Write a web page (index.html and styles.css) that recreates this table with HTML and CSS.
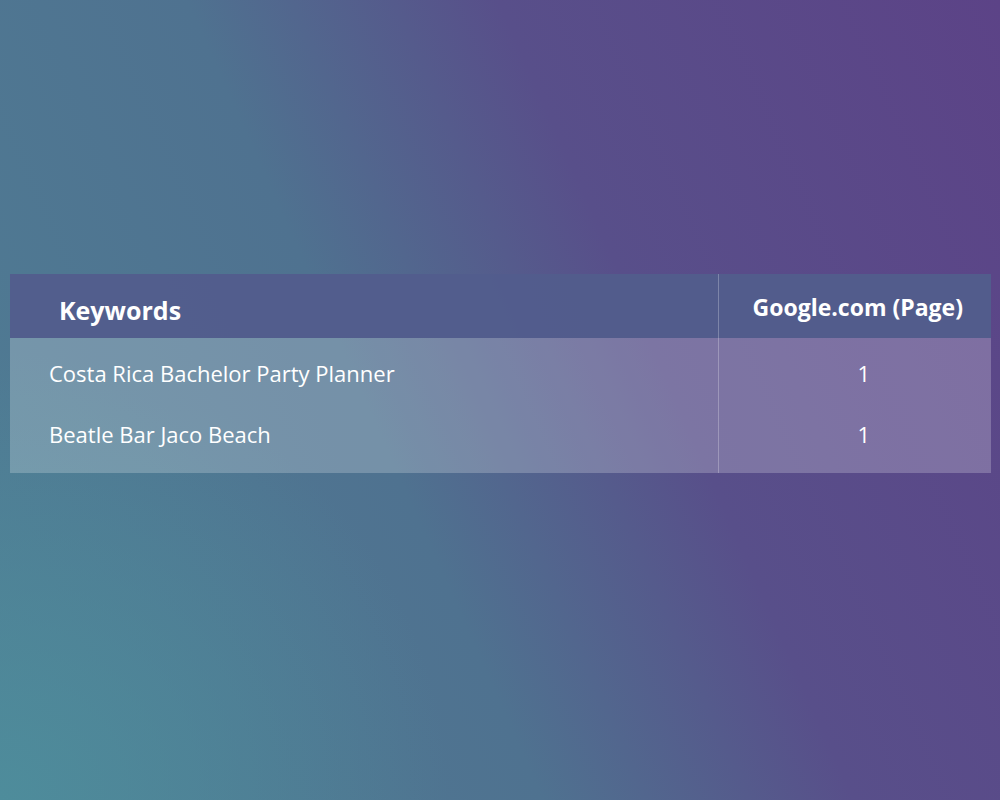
FILE: index.html
```html
<!DOCTYPE html>
<html>
<head>
<meta charset="utf-8">
<link rel="stylesheet" href="styles.css">
</head>
<body>
<main class="page">
  <table class="rank-table">
    <colgroup>
      <col class="c-kw">
      <col class="c-rank">
    </colgroup>
    <thead>
      <tr>
        <th class="col-kw">Keywords</th>
        <th class="col-rank">Google.com (Page)</th>
      </tr>
    </thead>
    <tbody>
      <tr class="first">
        <td class="col-kw">Costa Rica Bachelor Party Planner</td>
        <td class="col-rank">1</td>
      </tr>
      <tr class="last">
        <td class="col-kw">Beatle Bar Jaco Beach</td>
        <td class="col-rank">1</td>
      </tr>
    </tbody>
  </table>
</main>
</body>
</html>
```
FILE: styles.css
```css
html, body {
  margin: 0;
  padding: 0;
  height: 100%;
}
body {
  font-family: "Open Sans", "Noto Sans", sans-serif;
  color: #fff;
  background:
    radial-gradient(circle at 0% 100%, rgba(78, 142, 156, 0.9) 0%, rgba(78, 142, 156, 0) 35%),
    linear-gradient(66deg, #4f7d94 0%, #4f7290 40%, #584f8a 63%, #5c4387 100%);
}
.page {
  padding: 274px 9px 0 10px;
}
.rank-table {
  width: 981px;
  table-layout: fixed;
  border-collapse: collapse;
}
.c-kw { width: 708px; }
.c-rank { width: 273px; }
.rank-table th,
.rank-table td {
  padding: 0;
  vertical-align: top;
  line-height: 30px;
}
.rank-table thead tr {
  background: rgba(82, 93, 140, 0.96);
  height: 64px;
}
.rank-table th {
  font-weight: 700;
  text-align: left;
}
.rank-table th.col-kw {
  font-size: 25px;
  padding: 21px 0 0 49px;
}
.rank-table th.col-rank {
  font-size: 23px;
  text-align: center;
  padding: 18px 0 0 6px;
  border-left: 1px solid rgba(255, 255, 255, 0.25);
}
.rank-table tbody tr {
  background: rgba(255, 255, 255, 0.22);
}
.rank-table td {
  font-size: 22px;
  font-weight: 400;
}
.rank-table tr.first { height: 66px; }
.rank-table tr.last { height: 69px; }
.rank-table tr.first td { padding-top: 20px; }
.rank-table tr.last td { padding-top: 15px; }
.rank-table td.col-kw {
  padding-left: 39px;
}
.rank-table td.col-rank {
  text-align: center;
  padding-left: 18px;
  border-left: 1px solid rgba(255, 255, 255, 0.25);
}
```
